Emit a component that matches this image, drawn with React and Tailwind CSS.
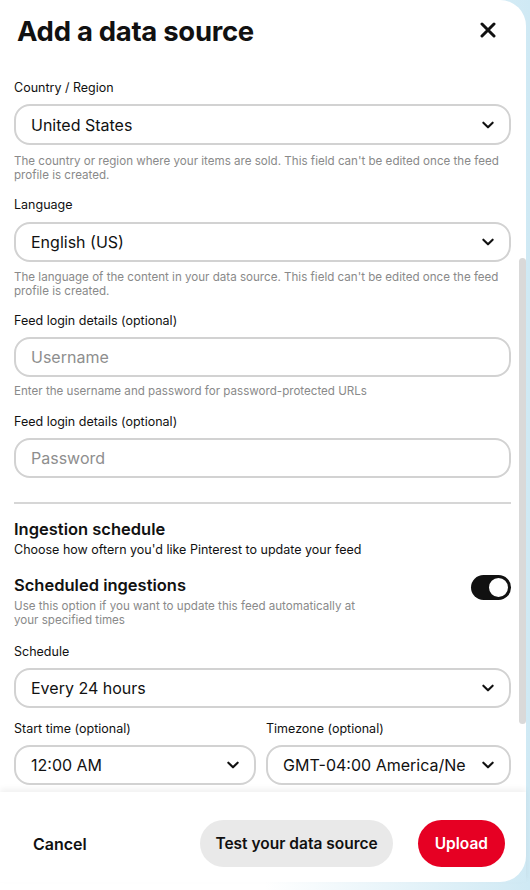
import React from "react";

const font = { fontFamily: "Inter, 'Liberation Sans', sans-serif" };

function Chevron() {
  return (
    <svg width="14" height="14" viewBox="0 0 24 24" className="shrink-0">
      <path d="M4 8l8 8 8-8" fill="none" stroke="#111" strokeWidth="3.6" strokeLinecap="round" strokeLinejoin="round" />
    </svg>
  );
}

function Select({ value, className = "" }) {
  return (
    <div className={`flex h-[40px] min-w-0 items-center justify-between gap-[10px] rounded-[16px] border-2 border-[#d2d2d2] bg-white pl-[15px] pr-[14px] ${className}`}>
      <span className="min-w-0 whitespace-nowrap text-[16px] text-[#111]">{value}</span>
      <Chevron />
    </div>
  );
}

function Input({ placeholder }) {
  return (
    <div className="flex h-[40px] items-center rounded-[16px] border-2 border-[#d2d2d2] bg-white px-[15px]">
      <span className="text-[16px] text-[#8e8e8e]">{placeholder}</span>
    </div>
  );
}

function Label({ children, className = "" }) {
  return <p className={`text-[12.5px] leading-[18px] text-[#111] ${className}`}>{children}</p>;
}

function Help({ children, className = "" }) {
  return <p className={`text-[11.6px] leading-[14px] text-[#8a8a8a] ${className}`}>{children}</p>;
}

export default function App() {
  return (
    <div style={font} className="h-[890px] w-[530px] overflow-hidden bg-gradient-to-r from-white via-white to-[#cfe9f4]">
      <div className="flex h-[882px] w-[526px] flex-col rounded-r-[26px] bg-white">
        {/* header */}
        <div className="flex h-[64px] items-start justify-between pl-[17px] pr-[30px] pt-[14px]">
          <h1 className="text-[27.5px] font-bold leading-[34px] tracking-[-0.3px] text-[#111]">Add a data source</h1>
          <svg width="16" height="16" viewBox="0 0 16 16" className="mt-[8px]">
            <path d="M2 2l12 12M14 2L2 14" stroke="#111" strokeWidth="3" strokeLinecap="round" />
          </svg>
        </div>

        {/* scroll area */}
        <div className="relative flex-1 overflow-hidden">
          <div className="pl-[14px] pr-[15px] pt-[15px]">
            <Label>Country / Region</Label>
            <Select value="United States" className="mt-[7px] h-[41px]" />
            <Help className="mt-[9px]">
              The country or region where your items are sold. This field can't be edited once the feed profile is created.
            </Help>

            <Label className="mt-[14px]">Language</Label>
            <Select value="English (US)" className="mt-[8px]" />
            <Help className="mt-[8px]">
              The language of the content in your data source. This field can't be edited once the feed profile is created.
            </Help>

            <Label className="mt-[14px]">Feed login details (optional)</Label>
            <div className="mt-[7px]">
              <Input placeholder="Username" />
            </div>
            <Help className="mt-[7px]">Enter the username and password for password-protected URLs</Help>

            <Label className="mt-[15px]">Feed login details (optional)</Label>
            <div className="mt-[7px]">
              <Input placeholder="Password" />
            </div>

            <div className="mt-[24px] h-[2px] bg-[#d6d6d6]" />

            <p className="mt-[14px] text-[16.5px] font-semibold leading-[22px] text-[#111]">Ingestion schedule</p>
            <p className="mt-[2px] text-[12.5px] leading-[16px] text-[#111]">Choose how oftern you'd like Pinterest to update your feed</p>

            <div className="mt-[16px] flex items-start justify-between">
              <div>
                <p className="text-[16.5px] font-semibold leading-[22px] text-[#111]">Scheduled ingestions</p>
                <Help className="mt-[3px] w-[360px]">Use this option if you want to update this feed automatically at your specified times</Help>
              </div>
              <div className="mt-[1px] flex h-[25px] w-[40px] items-center justify-end rounded-full bg-[#111] pr-[1px]">
                <div className="h-[23px] w-[23px] rounded-full border-2 border-[#111] bg-white" />
              </div>
            </div>

            <Label className="mt-[16px]">Schedule</Label>
            <Select value="Every 24 hours" className="mt-[7px]" />

            <div className="mt-[12px] grid grid-cols-[242px_minmax(0,1fr)] gap-[10px]">
              <div className="min-w-0">
                <Label>Start time (optional)</Label>
                <Select value="12:00 AM" className="mt-[7px]" />
              </div>
              <div className="min-w-0">
                <Label>Timezone (optional)</Label>
                <Select value="GMT-04:00 America/Ne" className="mt-[7px]" />
              </div>
            </div>
          </div>

          {/* scrollbar */}
          <div className="absolute right-[0px] top-[194px] h-[466px] w-[7px] rounded-full bg-[#d9d9d9]" />
        </div>

        {/* footer */}
        <div className="flex h-[90px] items-start justify-between pl-[33px] pr-[21px] pt-[28px] shadow-[0_-3px_6px_rgba(0,0,0,0.06)]">
          <span className="mt-[12px] text-[16px] font-semibold text-[#111]">Cancel</span>
          <div className="flex items-center gap-[25px]">
            <div className="flex h-[47px] items-center rounded-full bg-[#e9e9e9] px-[15px] text-[15.5px] font-semibold text-[#111]">
              Test your data source
            </div>
            <div className="flex h-[47px] items-center rounded-full bg-[#e60023] px-[17px] text-[15.5px] font-semibold text-white">
              Upload
            </div>
          </div>
        </div>
      </div>
    </div>
  );
}
